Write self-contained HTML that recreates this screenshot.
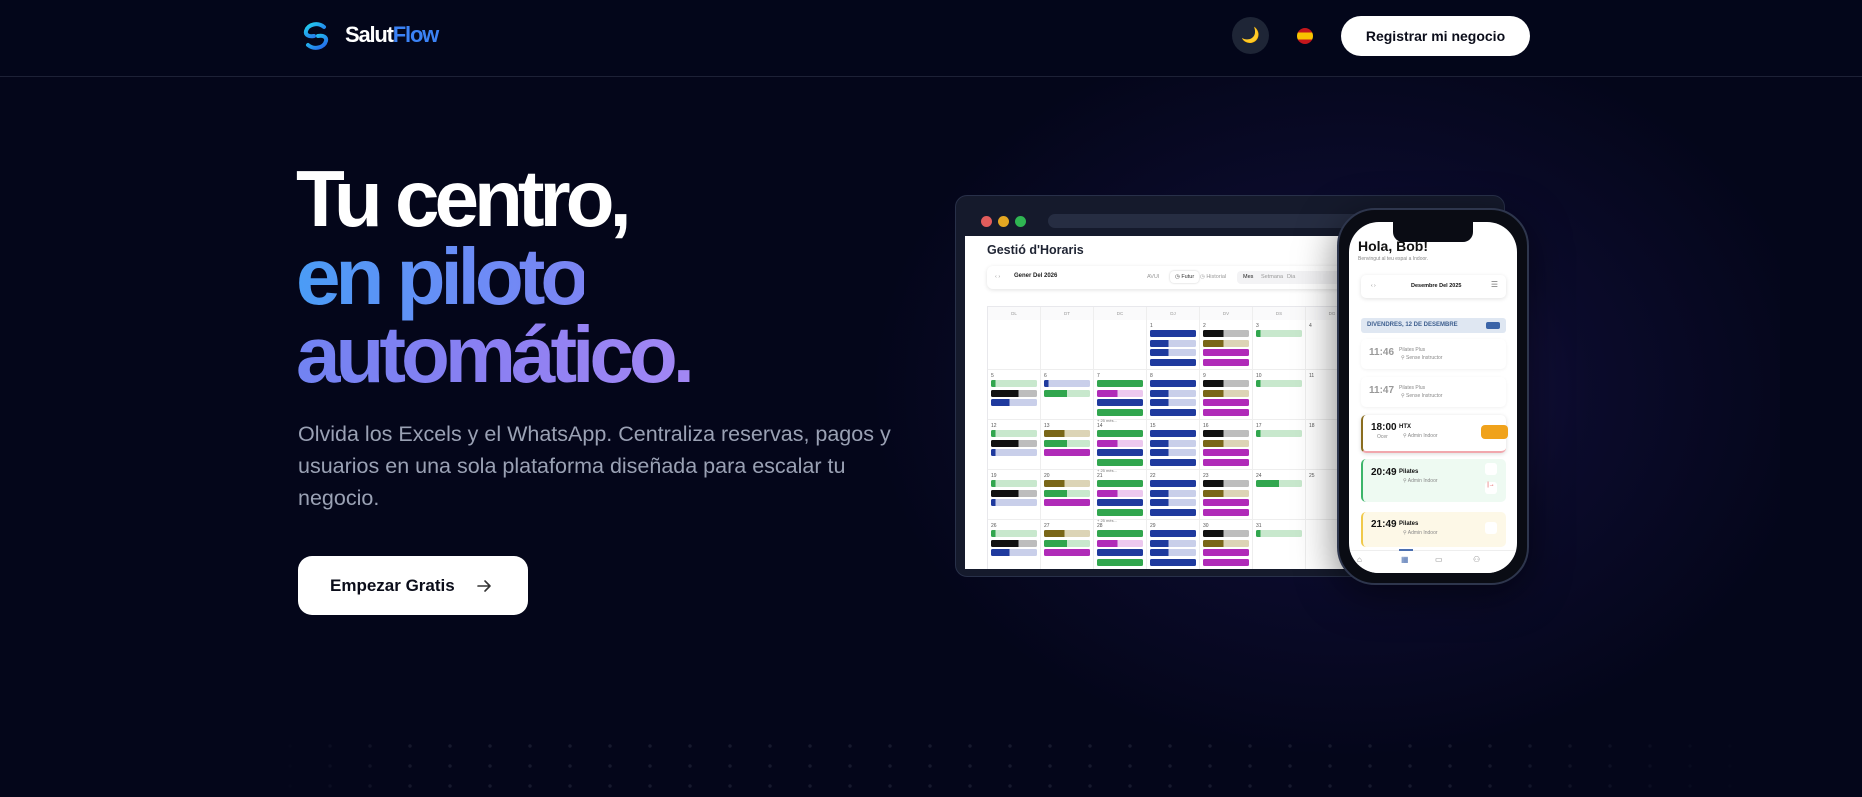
<!DOCTYPE html>
<html><head><meta charset="utf-8">
<style>
*{box-sizing:border-box;margin:0;padding:0}
html,body{width:1862px;height:797px;overflow:hidden}
body{background:#04061a;font-family:"Liberation Sans",sans-serif;position:relative;color:#fff}
.glow{position:absolute;left:820px;top:20px;width:960px;height:740px;background:radial-gradient(ellipse 50% 50% at 55% 50%,rgba(62,42,150,.48),rgba(32,26,96,.24) 50%,rgba(4,6,26,0) 100%)}
.dots{position:absolute;left:270px;top:736px;width:1500px;height:61px;background-image:radial-gradient(circle,#171a2e 1.5px,transparent 2px);background-size:40px 20px;-webkit-mask-image:linear-gradient(90deg,transparent,#000 10%,#000 80%,transparent)}
.hdr{position:absolute;left:0;top:0;width:1862px;height:77px;border-bottom:1px solid #1d2136;background:#03061a}
.logo{position:absolute;left:300px;top:20px}
.brand{position:absolute;left:345px;top:22px;font-size:22px;font-weight:700;letter-spacing:-1.2px}
.brand span{color:#3b82f6}
.moon{position:absolute;left:1232px;top:17px;width:37px;height:37px;border-radius:50%;background:#1e2536;text-align:center;line-height:37px;font-size:15px;color:#f3c15a}
.flag{position:absolute;left:1297px;top:28px;width:16px;height:16px;border-radius:50%;background:linear-gradient(#c4161c 0 27%,#f9c300 27% 73%,#c4161c 73%)}
.reg{position:absolute;left:1341px;top:16px;width:189px;height:40px;border-radius:20px;background:#fff;color:#0b0d1a;font-size:14px;font-weight:700;text-align:center;line-height:40px}
h1{position:absolute;left:296px;top:160px;font-size:80px;line-height:78px;font-weight:700;letter-spacing:-5px}
.g1{background:linear-gradient(90deg,#4a9cf6,#6b8cf6 60%,#7c84f3);-webkit-background-clip:text;color:transparent}
.g2{background:linear-gradient(90deg,#7183f2,#8b7ff2 50%,#a287f4);-webkit-background-clip:text;color:transparent}
.p{position:absolute;left:298px;top:418px;width:600px;font-size:21.5px;line-height:32px;color:#9aa1b4}
.cta{position:absolute;left:298px;top:556px;width:230px;height:59px;border-radius:14px;background:#fff;color:#0b0d1a;font-size:17px;font-weight:700;line-height:59px;padding-left:32px}
.cta svg{position:absolute;left:178px;top:22px}
.br{position:absolute;left:955px;top:195px;width:550px;height:382px;border-radius:12px;background:#151a2c;border:1px solid #283049;overflow:hidden}
.tl{position:absolute;top:20px;width:11px;height:11px;border-radius:50%}
.addr{position:absolute;left:92px;top:18px;width:380px;height:14px;border-radius:7px;background:#262d42}
.scr{position:absolute;left:9px;top:40px;width:400px;height:333px;background:#fff;overflow:hidden;color:#222}
.tt{position:absolute;left:22px;top:7px;font-size:12.5px;font-weight:700;color:#1f2433}
.tb{position:absolute;left:22px;top:30px;width:380px;height:23px;border-radius:6px;box-shadow:0 1px 4px rgba(0,0,0,.12);font-size:5.5px;color:#999}
.cal{position:absolute;left:22px;top:70px;width:380px;height:270px;border-top:1px solid #e8e8ec;border-left:1px solid #e8e8ec}
.hd{position:absolute;top:0;height:13px;width:53px;font-size:4.5px;color:#999;text-align:center;line-height:13px;border-right:1px solid #eee;background:#fafafb}
.cell{position:absolute;width:53px;height:50px;border-right:1px solid #eee;border-bottom:1px solid #eee;padding:3px 3px 0 3px}
.n{font-size:5px;color:#555;height:7px}
.e{height:7px;border-radius:1.5px;margin-bottom:2.5px;width:46px}
.b{background:#1f3a9e}.bh{background:linear-gradient(90deg,#1f3a9e 40%,#c9cfea 40%)}
.k{background:linear-gradient(90deg,#111 45%,#bdbdbd 45%)}.o{background:linear-gradient(90deg,#7a6618 45%,#dcd4b6 45%)}
.m{background:#b02bb8}.mp{background:linear-gradient(90deg,#b02bb8 45%,#ecc8ef 45%)}
.g{background:#31a64e}.gl{background:linear-gradient(90deg,#31a64e 10%,#c8e8cd 10%)}.gh{background:linear-gradient(90deg,#31a64e 50%,#c8e8cd 50%)}
.kb{background:linear-gradient(90deg,#111 60%,#bdbdbd 60%)}
.more{font-size:4px;color:#777}
.ph{position:absolute;left:1337px;top:208px;width:192px;height:377px;border-radius:38px;background:#0a0c14;border:2px solid #2e364d;box-shadow:0 10px 40px rgba(0,0,0,.5)}
.ps{position:absolute;left:10px;top:12px;width:168px;height:351px;border-radius:30px;background:#fff;overflow:hidden;color:#111}
.notch{position:absolute;left:44px;top:0;width:80px;height:20px;background:#0a0c14;border-radius:0 0 10px 10px}
.card{position:absolute;left:12px;width:145px;border-radius:5px}
.tm{position:absolute;left:8px;font-size:10px;font-weight:700}
.lb{position:absolute;font-size:5px;color:#888}
</style></head><body>
<div class="glow"></div>
<div class="dots"></div>
<div class="hdr">
<svg class="logo" width="32" height="32" viewBox="0 0 32 32"><defs><linearGradient id="lg" x1="0" y1="0" x2="1" y2="1"><stop offset="0" stop-color="#22d3ee"/><stop offset="1" stop-color="#2563eb"/></linearGradient></defs><path d="M24 7 C18 2 8 4 6 11 C5 15 9 17 14 16" fill="none" stroke="url(#lg)" stroke-width="4" stroke-linecap="round"/><path d="M8 25 C14 30 24 28 26 21 C27 17 23 15 18 16" fill="none" stroke="url(#lg)" stroke-width="4" stroke-linecap="round"/></svg>
<div class="brand">Salut<span>Flow</span></div>
<div class="moon">🌙</div>
<div class="flag"></div>
<div class="reg">Registrar mi negocio</div>
</div>
<h1>Tu centro,<br><span class="g1">en piloto</span><br><span class="g2">automático.</span></h1>
<div class="p">Olvida los Excels y el WhatsApp. Centraliza reservas, pagos y usuarios en una sola plataforma diseñada para escalar tu negocio.</div>
<div class="cta">Empezar Gratis<svg width="16" height="16" viewBox="0 0 16 16"><path d="M2 8h12M9 3l5 5-5 5" fill="none" stroke="#333" stroke-width="1.6" stroke-linecap="round" stroke-linejoin="round"/></svg></div>

<div class="br">
<div class="tl" style="left:25px;background:#e25c5c"></div><div class="tl" style="left:42px;background:#e4a722"></div><div class="tl" style="left:59px;background:#2fb552"></div>
<div class="addr"></div>
<div class="scr">
<div class="tt">Gestió d'Horaris</div>
<div class="tb"><span style="position:absolute;left:8px;top:8px">‹ ›</span><b style="position:absolute;left:27px;top:7px;font-size:6px;color:#222">Gener Del 2026</b><span style="position:absolute;left:160px;top:8px">AVUI</span><span style="position:absolute;left:183px;top:5px;padding:3px 5px;border-radius:4px;box-shadow:0 0 2px #ccc;color:#333">◷ Futur</span><span style="position:absolute;left:213px;top:8px">◷ Historial</span><span style="position:absolute;left:250px;top:5px;width:130px;height:13px;border-radius:4px;background:#f3f3f5"></span><span style="position:absolute;left:256px;top:8px;color:#222">Mes</span><span style="position:absolute;left:274px;top:8px">Setmana</span><span style="position:absolute;left:300px;top:8px">Dia</span></div>
<div class="cal">
<div class="hd" style="left:0">DL</div><div class="hd" style="left:53px">DT</div><div class="hd" style="left:106px">DC</div><div class="hd" style="left:159px">DJ</div><div class="hd" style="left:212px">DV</div><div class="hd" style="left:265px">DS</div><div class="hd" style="left:318px">DG</div>
<div class="cell" style="left:0;top:13px"></div><div class="cell" style="left:53px;top:13px"></div><div class="cell" style="left:106px;top:13px"></div>
<div class="cell" style="left:159px;top:13px"><div class="n">1</div><div class="e b"></div><div class="e bh"></div><div class="e bh"></div><div class="e b"></div></div>
<div class="cell" style="left:212px;top:13px"><div class="n">2</div><div class="e k"></div><div class="e o"></div><div class="e m"></div><div class="e m"></div></div>
<div class="cell" style="left:265px;top:13px"><div class="n">3</div><div class="e gl"></div></div>
<div class="cell" style="left:318px;top:13px"><div class="n">4</div></div>
<div class="cell" style="left:0;top:63px"><div class="n">5</div><div class="e gl"></div><div class="e kb"></div><div class="e bh"></div></div>
<div class="cell" style="left:53px;top:63px"><div class="n">6</div><div class="e bh" style="background:linear-gradient(90deg,#1f3a9e 10%,#c9cfea 10%)"></div><div class="e gh"></div></div>
<div class="cell" style="left:106px;top:63px"><div class="n">7</div><div class="e g"></div><div class="e mp"></div><div class="e b"></div><div class="e g"></div><div class="more">+ 25 més...</div></div>
<div class="cell" style="left:159px;top:63px"><div class="n">8</div><div class="e b"></div><div class="e bh"></div><div class="e bh"></div><div class="e b"></div></div>
<div class="cell" style="left:212px;top:63px"><div class="n">9</div><div class="e k"></div><div class="e o"></div><div class="e m"></div><div class="e m"></div></div>
<div class="cell" style="left:265px;top:63px"><div class="n">10</div><div class="e gl"></div></div>
<div class="cell" style="left:318px;top:63px"><div class="n">11</div></div>
<div class="cell" style="left:0;top:113px"><div class="n">12</div><div class="e gl"></div><div class="e kb"></div><div class="e bh" style="background:linear-gradient(90deg,#1f3a9e 10%,#c9cfea 10%)"></div></div>
<div class="cell" style="left:53px;top:113px"><div class="n">13</div><div class="e o"></div><div class="e gh"></div><div class="e m"></div></div>
<div class="cell" style="left:106px;top:113px"><div class="n">14</div><div class="e g"></div><div class="e mp"></div><div class="e b"></div><div class="e g"></div><div class="more">+ 25 més...</div></div>
<div class="cell" style="left:159px;top:113px"><div class="n">15</div><div class="e b"></div><div class="e bh"></div><div class="e bh"></div><div class="e b"></div></div>
<div class="cell" style="left:212px;top:113px"><div class="n">16</div><div class="e k"></div><div class="e o"></div><div class="e m"></div><div class="e m"></div></div>
<div class="cell" style="left:265px;top:113px"><div class="n">17</div><div class="e gl"></div></div>
<div class="cell" style="left:318px;top:113px"><div class="n">18</div></div>
<div class="cell" style="left:0;top:163px"><div class="n">19</div><div class="e gl"></div><div class="e kb"></div><div class="e bh" style="background:linear-gradient(90deg,#1f3a9e 10%,#c9cfea 10%)"></div></div>
<div class="cell" style="left:53px;top:163px"><div class="n">20</div><div class="e o"></div><div class="e gh"></div><div class="e m"></div></div>
<div class="cell" style="left:106px;top:163px"><div class="n">21</div><div class="e g"></div><div class="e mp"></div><div class="e b"></div><div class="e g"></div><div class="more">+ 25 més...</div></div>
<div class="cell" style="left:159px;top:163px"><div class="n">22</div><div class="e b"></div><div class="e bh"></div><div class="e bh"></div><div class="e b"></div></div>
<div class="cell" style="left:212px;top:163px"><div class="n">23</div><div class="e k"></div><div class="e o"></div><div class="e m"></div><div class="e m"></div></div>
<div class="cell" style="left:265px;top:163px"><div class="n">24</div><div class="e gh"></div></div>
<div class="cell" style="left:318px;top:163px"><div class="n">25</div></div>
<div class="cell" style="left:0;top:213px"><div class="n">26</div><div class="e gl"></div><div class="e kb"></div><div class="e bh"></div></div>
<div class="cell" style="left:53px;top:213px"><div class="n">27</div><div class="e o"></div><div class="e gh"></div><div class="e m"></div></div>
<div class="cell" style="left:106px;top:213px"><div class="n">28</div><div class="e g"></div><div class="e mp"></div><div class="e b"></div><div class="e g"></div><div class="more">+ 25 més...</div></div>
<div class="cell" style="left:159px;top:213px"><div class="n">29</div><div class="e b"></div><div class="e bh"></div><div class="e bh"></div><div class="e b"></div></div>
<div class="cell" style="left:212px;top:213px"><div class="n">30</div><div class="e k"></div><div class="e o"></div><div class="e m"></div><div class="e m"></div></div>
<div class="cell" style="left:265px;top:213px"><div class="n">31</div><div class="e gl"></div></div>
<div class="cell" style="left:318px;top:213px"></div>
</div>
</div>
</div>

<div class="ph"><div class="ps">
<div class="notch"></div>
<div style="position:absolute;left:9px;top:16px;font-size:14px;font-weight:700">Hola, Bob!</div>
<div class="lb" style="left:9px;top:34px">Benvingut al teu espai a Indoor.</div>
<div class="card" style="top:53px;height:23px;box-shadow:0 1px 4px rgba(0,0,0,.12)"><span class="lb" style="left:10px;top:8px">‹ ›</span><b style="position:absolute;left:50px;top:8px;font-size:5.5px">Desembre Del 2025</b><span style="position:absolute;right:8px;top:5px;font-size:8px;color:#777">☰</span></div>
<div class="card" style="top:96px;height:15px;background:#dfe7f2;border-radius:3px"><b style="position:absolute;left:6px;top:4px;font-size:6px;color:#3e5f8f">DIVENDRES, 12 DE DESEMBRE</b><span style="position:absolute;right:6px;top:4px;width:14px;height:7px;border-radius:2px;background:#3b64a8"></span></div>
<div class="card" style="top:117px;height:30px;box-shadow:0 1px 3px rgba(0,0,0,.06)"><span class="tm" style="top:8px;color:#999">11:46</span><span class="lb" style="left:38px;top:8px">Pilates Plus</span><span class="lb" style="left:40px;top:16px">⚲ Sense Instructor</span></div>
<div class="card" style="top:155px;height:30px;box-shadow:0 1px 3px rgba(0,0,0,.06)"><span class="tm" style="top:8px;color:#999">11:47</span><span class="lb" style="left:38px;top:8px">Pilates Plus</span><span class="lb" style="left:40px;top:16px">⚲ Sense Instructor</span></div>
<div class="card" style="top:193px;height:38px;box-shadow:0 1px 4px rgba(0,0,0,.15);border-left:2px solid #8a6d1f;border-bottom:2px solid #f1a7ad"><span class="tm" style="top:7px">18:00</span><b style="position:absolute;left:36px;top:9px;font-size:6px">HTX</b><span class="lb" style="left:40px;top:18px">⚲ Admin Indoor</span><span class="lb" style="left:14px;top:19px">Ocer</span><span style="position:absolute;left:118px;top:10px;width:27px;height:14px;border-radius:4px;background:#f0a21b"></span></div>
<div class="card" style="top:237px;height:43px;background:#eefaf2;border-left:2px solid #3cb56a"><span class="tm" style="top:8px">20:49</span><b style="position:absolute;left:36px;top:10px;font-size:6px">Pilates</b><span class="lb" style="left:40px;top:19px">⚲ Admin Indoor</span><span style="position:absolute;left:122px;top:4px;width:12px;height:12px;border-radius:3px;background:#fff"></span><span style="position:absolute;left:122px;top:23px;width:12px;height:12px;border-radius:3px;background:#fff;color:#d33;font-size:6px;text-align:center">|→</span></div>
<div class="card" style="top:290px;height:35px;background:#fdf8e7;border-left:2px solid #f0c94a"><span class="tm" style="top:7px">21:49</span><b style="position:absolute;left:36px;top:9px;font-size:6px">Pilates</b><span class="lb" style="left:40px;top:18px">⚲ Admin Indoor</span><span style="position:absolute;left:122px;top:10px;width:12px;height:12px;border-radius:3px;background:#fff"></span></div>
<div style="position:absolute;left:0;top:328px;width:168px;height:23px;background:#fff;border-top:1px solid #eee"><span style="position:absolute;left:50px;top:-2px;width:14px;height:2px;background:#4b6fb0"></span><span class="lb" style="left:8px;top:4px;font-size:8px">⌂</span><span class="lb" style="left:52px;top:4px;font-size:8px;color:#4b6fb0">▦</span><span class="lb" style="left:86px;top:4px;font-size:8px">▭</span><span class="lb" style="left:124px;top:4px;font-size:8px">⚇</span></div>
</div></div>
</body></html>
